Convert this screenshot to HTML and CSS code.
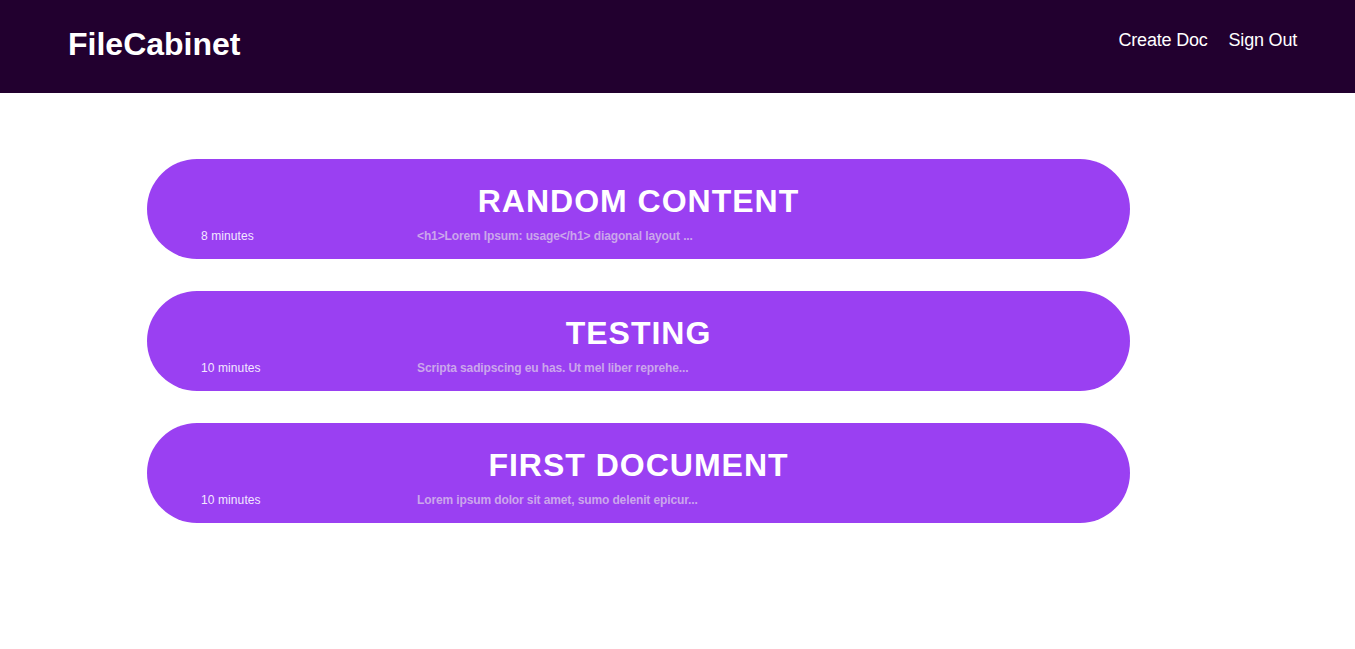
FILE: index.html
```html
<!DOCTYPE html>
<html lang="en">
<head>
<meta charset="utf-8">
<title>FileCabinet</title>
<link rel="stylesheet" href="styles.css">
</head>
<body>
<header class="topbar">
  <div class="logo">FileCabinet</div>
  <nav class="nav">
    <a class="nav-link" href="#">Create Doc</a>
    <a class="nav-link" href="#">Sign Out</a>
  </nav>
</header>
<main class="docs">
  <article class="doc">
    <h2 class="doc-title">RANDOM CONTENT</h2>
    <div class="doc-meta">
      <span class="doc-time">8 minutes</span>
      <span class="doc-excerpt">&lt;h1&gt;Lorem Ipsum: usage&lt;/h1&gt; diagonal layout ...</span>
    </div>
  </article>
  <article class="doc">
    <h2 class="doc-title">TESTING</h2>
    <div class="doc-meta">
      <span class="doc-time">10 minutes</span>
      <span class="doc-excerpt">Scripta sadipscing eu has. Ut mel liber reprehe...</span>
    </div>
  </article>
  <article class="doc">
    <h2 class="doc-title">FIRST DOCUMENT</h2>
    <div class="doc-meta">
      <span class="doc-time">10 minutes</span>
      <span class="doc-excerpt">Lorem ipsum dolor sit amet, sumo delenit epicur...</span>
    </div>
  </article>
</main>
</body>
</html>
```
FILE: styles.css
```css
* { box-sizing: border-box; }
html, body { margin: 0; padding: 0; background: #ffffff; }
body { font-family: "Liberation Sans", Arial, sans-serif; }

.topbar {
  height: 93px;
  background: #22002f;
  display: flex;
  justify-content: space-between;
  align-items: flex-start;
  padding: 0 58px 0 68px;
}
.logo {
  margin-top: 26px;
  font-size: 32px;
  font-weight: 700;
  color: #ffffff;
  line-height: 37px;
}
.nav {
  margin-top: 30px;
  display: flex;
  gap: 21px;
}
.nav-link {
  color: #ffffff;
  text-decoration: none;
  font-size: 18px;
  line-height: 21px;
  letter-spacing: -0.2px;
}

.docs {
  width: 983px;
  margin: 66px 0 0 147px;
  display: flex;
  flex-direction: column;
  gap: 32px;
}
.doc {
  height: 100px;
  background: #9a40f2;
  border-radius: 50px;
  padding: 24px 0 0 0;
}
.doc-title {
  margin: 0;
  text-align: center;
  color: #ffffff;
  font-size: 32px;
  font-weight: 700;
  line-height: 37px;
  letter-spacing: 1px;
}
.doc-meta {
  margin-top: 9px;
  display: grid;
  grid-template-columns: 216px 1fr;
  padding-left: 54px;
  font-size: 12px;
  line-height: 14px;
}
.doc-time { color: #f3e8ff; letter-spacing: 0.1px; }
.doc-excerpt { color: #cba6ec; font-weight: 700; letter-spacing: -0.12px; }
```
